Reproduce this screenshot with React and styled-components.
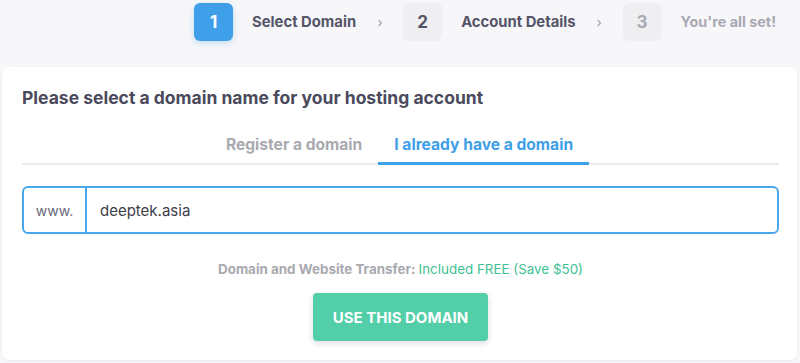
import React from "react";
import styled, { createGlobalStyle } from "styled-components";

const GlobalStyle = createGlobalStyle`
  body {
    margin: 0;
    background: #f7f7f9;
    font-family: Inter, "Noto Sans", sans-serif;
  }
`;

const steps = [
  { num: 1, label: "Select Domain", state: "active" },
  { num: 2, label: "Account Details", state: "next" },
  { num: 3, label: "You're all set!", state: "later" },
];

function Chevron() {
  return (
    <svg width="8" height="10" viewBox="0 0 8 10">
      <path d="M2.5 2 L5.5 5 L2.5 8" fill="none" stroke="#a4a4ad" strokeWidth="1.2" />
    </svg>
  );
}

function App() {
  return (
    <Page>
      <GlobalStyle />
      <Steps>
        {steps.map((s, i) => (
          <React.Fragment key={s.num}>
            <Step>
              <StepNum $state={s.state}>{s.num}</StepNum>
              <StepLabel $state={s.state}>{s.label}</StepLabel>
            </Step>
            {i < steps.length - 1 && (
              <ChevronWrap>
                <Chevron />
              </ChevronWrap>
            )}
          </React.Fragment>
        ))}
      </Steps>
      <Card>
        <Title>Please select a domain name for your hosting account</Title>
        <Tabs>
          <Tab>Register a domain</Tab>
          <Tab $active>I already have a domain</Tab>
        </Tabs>
        <InputGroup>
          <Prefix>www.</Prefix>
          <DomainInput defaultValue="deeptek.asia" />
        </InputGroup>
        <Note>
          Domain and Website Transfer: <Free>Included FREE (Save $50)</Free>
        </Note>
        <ButtonRow>
          <Button>USE THIS DOMAIN</Button>
        </ButtonRow>
      </Card>
    </Page>
  );
}

export default App;

const Page = styled.div`
  width: 800px;
  height: 363px;
  overflow: hidden;
`;
const Steps = styled.div`
  display: flex;
  justify-content: flex-end;
  align-items: center;
  padding: 2px 24px 0 0;
  height: 39px;
`;
const Step = styled.div`
  display: flex;
  align-items: center;
  gap: 19px;
`;
const StepNum = styled.div`
  width: 39px;
  height: 38px;
  border-radius: 6px;
  display: flex;
  align-items: center;
  justify-content: center;
  font-size: 17px;
  font-weight: 700;
  background: ${(p) => (p.$state === "active" ? "#3fa0e9" : "#efeff1")};
  color: ${(p) =>
    p.$state === "active" ? "#ffffff" : p.$state === "next" ? "#55556a" : "#a9a9b4"};
  box-shadow: ${(p) => (p.$state === "active" ? "0 2px 6px rgba(63,160,233,0.3)" : "none")};
`;
const StepLabel = styled.span`
  font-size: ${(p) => (p.$state === "later" ? "14.4px" : "14.8px")};
  font-weight: 700;
  color: ${(p) => (p.$state === "later" ? "#a9a9b4" : "#55556a")};
`;
const ChevronWrap = styled.div`
  width: 47px;
  display: flex;
  justify-content: center;
  padding-top: 2px;
`;
const Card = styled.div`
  margin: 26px 3px 0 2px;
  background: #fff;
  border-radius: 7px;
  padding: 20px 18px 0 20px;
  height: 293px;
  box-sizing: border-box;
  box-shadow: 0 1px 3px rgba(0, 0, 0, 0.06);
`;
const Title = styled.h2`
  margin: 0;
  font-size: 17.5px;
  font-weight: 700;
  color: #4a4a5c;
  line-height: 22px;
`;
const Tabs = styled.div`
  display: flex;
  justify-content: center;
  margin-top: 26px;
  border-bottom: 2px solid #ebebef;
  padding-right: 2px;
`;
const Tab = styled.div`
  padding: 0 16px 8px;
  margin-bottom: -2px;
  font-size: 15.6px;
  font-weight: 700;
  color: ${(p) => (p.$active ? "#3ea0e8" : "#a9a9b0")};
  border-bottom: 3px solid ${(p) => (p.$active ? "#3ea0e8" : "transparent")};
`;
const InputGroup = styled.div`
  display: flex;
  align-items: stretch;
  margin-top: 21px;
  height: 48px;
  border: 2px solid #4aa7ec;
  border-radius: 6px;
  box-sizing: border-box;
`;
const Prefix = styled.div`
  width: 61px;
  display: flex;
  align-items: center;
  justify-content: center;
  border-right: 2px solid #4aa7ec;
  font-size: 14px;
  color: #6a6a78;
`;
const DomainInput = styled.input`
  flex: 1;
  border: none;
  outline: none;
  background: transparent;
  padding: 0 13px;
  font-family: inherit;
  font-size: 15px;
  color: #3d3d4a;
`;
const Note = styled.p`
  margin: 27px 0 0;
  text-align: center;
  font-size: 13.4px;
  font-weight: 700;
  color: #a9a9b0;
`;
const Free = styled.span`
  font-weight: 400;
  color: #3ec194;
`;
const ButtonRow = styled.div`
  display: flex;
  justify-content: center;
  margin-top: 16px;
`;
const Button = styled.button`
  width: 175px;
  height: 48px;
  border: none;
  border-radius: 4px;
  background: #52cea8;
  color: #fff;
  font-family: inherit;
  font-size: 15px;
  font-weight: 700;
  box-shadow: 0 2px 6px rgba(0, 0, 0, 0.15);
  cursor: pointer;
`;
